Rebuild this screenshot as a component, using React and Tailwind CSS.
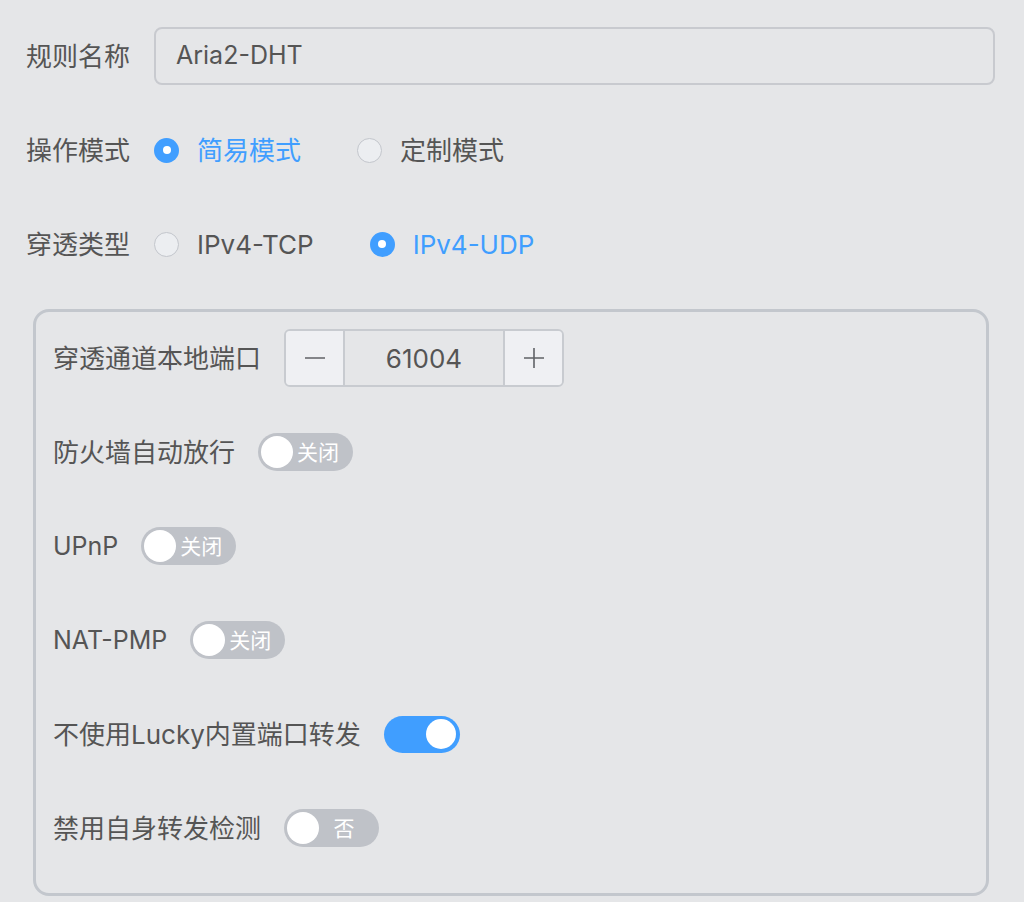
const Radio = ({ checked, label }) => (
  <label className="flex items-center gap-[18px]">
    <span
      className={
        checked
          ? "flex h-[25px] w-[25px] items-center justify-center rounded-full bg-[#409eff]"
          : "h-[25px] w-[25px] rounded-full border border-[#c3c6cc] bg-[#eceef1]"
      }
    >
      {checked && <span className="h-[8px] w-[8px] rounded-full bg-white" />}
    </span>
    <span className={checked ? "text-[#409eff]" : "text-[#555]"}>{label}</span>
  </label>
);

const Switch = ({ on, text }) =>
  on ? (
    <span className="flex h-[37px] w-[76px] items-center justify-end rounded-full bg-[#409eff] pr-[4px]">
      <span className="h-[30px] w-[30px] rounded-full bg-white" />
    </span>
  ) : (
    <span className="flex h-[38px] w-[95px] items-center rounded-full bg-[#bfc2c8] pl-[3px] pr-[10px]">
      <span className="h-[32px] w-[32px] shrink-0 rounded-full bg-white" />
      <span className="flex-1 text-center text-[21px] leading-none text-white">{text}</span>
    </span>
  );

const Row = ({ label, children }) => (
  <div className="mb-[36px] flex h-[58px] items-center gap-[23px]">
    <span className="text-[#555]">{label}</span>
    {children}
  </div>
);

export default function App() {
  return (
    <div className="min-h-[902px] bg-[#e5e6e8] pl-[26px] pr-[29px] pt-[27px] font-['Inter','Noto_Sans_CJK_SC',sans-serif] text-[26px]">
      <div className="mb-[36px] flex h-[58px] items-center">
        <span className="w-[128px] text-[#555]">规则名称</span>
        <div className="flex h-[58px] flex-1 items-center rounded-[8px] border-2 border-[#c8cacf] px-[20px] text-[25px] text-[#555]">
          Aria2-DHT
        </div>
      </div>

      <div className="mb-[36px] flex h-[58px] items-center">
        <span className="w-[128px] text-[#555]">操作模式</span>
        <div className="flex items-center gap-[56px]">
          <Radio checked label="简易模式" />
          <Radio label="定制模式" />
        </div>
      </div>

      <div className="mb-[36px] flex h-[58px] items-center">
        <span className="w-[128px] text-[#555]">穿透类型</span>
        <div className="flex items-center gap-[56px]">
          <Radio label="IPv4-TCP" />
          <Radio checked label="IPv4-UDP" />
        </div>
      </div>

      <div className="ml-[7px] mr-[6px] rounded-[16px] border-[3px] border-[#c3c7cd] px-[17px] pt-[17px]">
        <Row label="穿透通道本地端口">
          <div className="flex h-[58px] w-[280px] overflow-hidden rounded-[6px] border-2 border-[#c8cbd0] text-[#555]">
            <span className="flex w-[59px] items-center justify-center border-r-2 border-[#c8cbd0] bg-[#eff0f3]">
              <svg width="22" height="22" viewBox="0 0 22 22">
                <path d="M1 11h20" stroke="#606266" strokeWidth="1.6" />
              </svg>
            </span>
            <span className="flex flex-1 items-center justify-center">61004</span>
            <span className="flex w-[59px] items-center justify-center border-l-2 border-[#c8cbd0] bg-[#eff0f3]">
              <svg width="22" height="22" viewBox="0 0 22 22">
                <path d="M1 11h20M11 1v20" stroke="#606266" strokeWidth="1.6" />
              </svg>
            </span>
          </div>
        </Row>
        <Row label="防火墙自动放行">
          <Switch text="关闭" />
        </Row>
        <Row label={<span className="text-[25px]">UPnP</span>}>
          <Switch text="关闭" />
        </Row>
        <Row label={<span className="text-[25px]">NAT-PMP</span>}>
          <Switch text="关闭" />
        </Row>
        <Row label="不使用Lucky内置端口转发">
          <Switch on />
        </Row>
        <Row label="禁用自身转发检测">
          <Switch text="否" />
        </Row>
      </div>
    </div>
  );
}
